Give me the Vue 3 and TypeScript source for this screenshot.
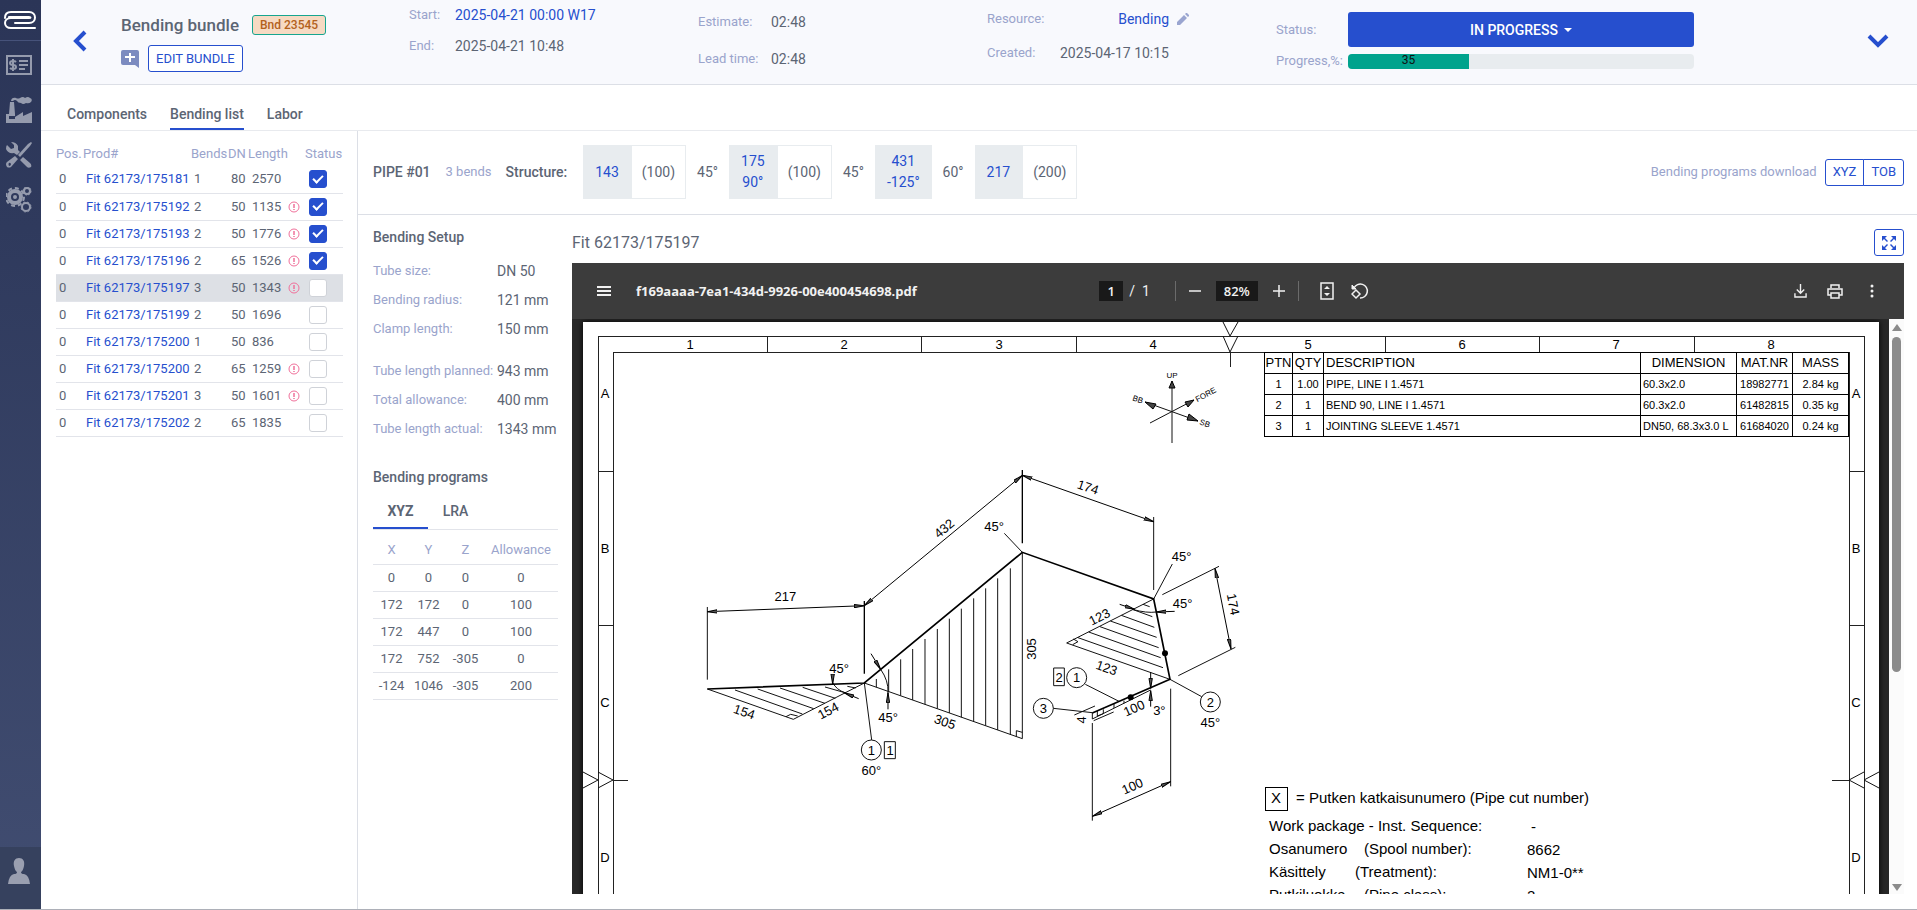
<script setup lang="ts">
import { ref } from 'vue'

interface Pipe { prod: string; bends: number; dn: number; length: number; alert: boolean; done: boolean }
interface Segment { main: string[]; extra?: string; angle?: string }
interface Mark { t: string; x: number; y: number; r?: number }

const pipes = ref<Pipe[]>([
  { prod: 'Fit 62173/175181', bends: 1, dn: 80, length: 2570, alert: false, done: true },
  { prod: 'Fit 62173/175192', bends: 2, dn: 50, length: 1135, alert: true, done: true },
  { prod: 'Fit 62173/175193', bends: 2, dn: 50, length: 1776, alert: true, done: true },
  { prod: 'Fit 62173/175196', bends: 2, dn: 65, length: 1526, alert: true, done: true },
  { prod: 'Fit 62173/175197', bends: 3, dn: 50, length: 1343, alert: true, done: false },
  { prod: 'Fit 62173/175199', bends: 2, dn: 50, length: 1696, alert: false, done: false },
  { prod: 'Fit 62173/175200', bends: 1, dn: 50, length: 836, alert: false, done: false },
  { prod: 'Fit 62173/175200', bends: 2, dn: 65, length: 1259, alert: true, done: false },
  { prod: 'Fit 62173/175201', bends: 3, dn: 50, length: 1601, alert: true, done: false },
  { prod: 'Fit 62173/175202', bends: 2, dn: 65, length: 1835, alert: false, done: false },
])
const selected = ref(4)
const progress = ref(35)
const page = ref('1')
const zoomLevel = ref('82%')

const segments: Segment[] = [
  { main: ['143'], extra: '(100)', angle: '45°' },
  { main: ['175', '90°'], extra: '(100)', angle: '45°' },
  { main: ['431', '-125°'], angle: '60°' },
  { main: ['217'], extra: '(200)' },
]

const setup = [
  [['Tube size:', 'DN 50'], ['Bending radius:', '121 mm'], ['Clamp length:', '150 mm']],
  [['Tube length planned:', '943 mm'], ['Total allowance:', '400 mm'], ['Tube length actual:', '1343 mm']],
]

const program = [
  [0, 0, 0, 0],
  [172, 172, 0, 100],
  [172, 447, 0, 100],
  [172, 752, -305, 0],
  [-124, 1046, -305, 200],
]

const parts = [
  ['1', '1.00', 'PIPE, LINE I 1.4571', '60.3x2.0', '18982771', '2.84 kg'],
  ['2', '1', 'BEND 90, LINE I 1.4571', '60.3x2.0', '61482815', '0.35 kg'],
  ['3', '1', 'JOINTING SLEEVE 1.4571', 'DN50, 68.3x3.0 L', '61684020', '0.24 kg'],
]

const columnTicks = [767, 921, 1076, 1385, 1539, 1694]
const columnMarks = [690, 844, 999, 1153, 1308, 1462, 1616, 1771]
const rowTicks = [471, 625]
const rowMarks: [string, number][] = [['A', 394], ['B', 549], ['C', 703], ['D', 858]]

/* Isometric drawing, three units per page pixel. */
const hatchTall: [number, number][] = [
  [559, 657], [596, 628], [632, 598], [668, 567], [705, 537], [742, 507],
  [778, 476], [814, 446], [851, 415], [887, 385], [923, 355], [961, 325],
]
const tallBase = (x: number) => Math.round(669 + 0.3523 * (x - 523))
const hatchLeft = 'M135 690L337 762M203 687L371 746M270 684L405 730M338 682L436 715M405 681L468 699M472 679L497 684'
const hatchRight = 'M1359 433L1379 440M1327 448L1387 470M1294 466L1393 502M1261 483L1400 532M1230 500L1406 563M1196 516L1412 593M1164 533L1419 623'
const dimensions = [
  'M52 455L523 437', 'M523 437L997 46', 'M997 46L1391 185', 'M1575 325L1623 567', 'M1207 1069L1442 965',
]
const pointers = [
  'M543 581L572 628', 'M594 748L594 698', 'M428 650L428 672', 'M506 716L462 698',
  'M1289 433L1334 448', 'M1454 454L1399 456', 'M1382 636L1382 685', 'M1382 740L1382 692',
]
const marks: Mark[] = [
  { t: '217', x: 286, y: 410 }, { t: '432', x: 762, y: 205, r: -40 }, { t: '45°', x: 912, y: 200 },
  { t: '154', x: 163, y: 755, r: 19 }, { t: '154', x: 414, y: 752, r: -28 }, { t: '45°', x: 447, y: 625 },
  { t: '45°', x: 594, y: 773 }, { t: '305', x: 765, y: 785, r: 19 }, { t: '305', x: 1025, y: 567, r: -90 },
  { t: '1', x: 544, y: 870 }, { t: '1', x: 600, y: 870 }, { t: '60°', x: 544, y: 932 },
  { t: '174', x: 1194, y: 81, r: 19 }, { t: '45°', x: 1475, y: 290 }, { t: '174', x: 1630, y: 433, r: 79 },
  { t: '45°', x: 1478, y: 431 }, { t: '123', x: 1228, y: 470, r: -27 }, { t: '123', x: 1250, y: 623, r: 19 },
  { t: '2', x: 1107, y: 651 }, { t: '1', x: 1160, y: 653 }, { t: '3', x: 1060, y: 745 },
  { t: '2', x: 1561, y: 726 }, { t: '45°', x: 1561, y: 788 }, { t: '100', x: 1332, y: 744, r: -24 },
  { t: '3°', x: 1408, y: 751 }, { t: '4', x: 1175, y: 780, r: -90 }, { t: '100', x: 1327, y: 978, r: -24 },
]
const balloons: [number, number][] = [[544, 870], [1160, 653], [1060, 745], [1561, 726]]

const legend: [string, string, number, string, number][] = [
  ['Work package - Inst. Sequence:', '', 0, '-', 831],
  ['Osanumero', '(Spool number):', 1364, '8662', 854],
  ['Käsittely', '(Treatment):', 1355, 'NM1-0**', 877],
  ['Putkiluokka', '(Pipe class):', 1364, '2', 900],
]
</script>

<template>
  <div class="app">
    <nav class="side" aria-label="Main">
      <a class="logo" href="#" aria-label="Home">
        <svg width="34" height="20" viewBox="0 0 34 20" fill="none" stroke="#fff" stroke-width="2" stroke-linecap="round">
          <path d="M2 8C2 4 4 2 8 2H26C34 2 34 13 26 13H12" />
          <path d="M6 7H26C28 7 28 8 26 8H8C0 8 0 18 8 18H32" />
        </svg>
      </a>
      <a class="nav" href="#" aria-label="Quotes">
        <svg width="26" height="20" viewBox="0 0 26 20">
          <path fill="none" stroke="#959bad" stroke-width="2" d="M1 1H25V19H1Z" />
          <path fill="none" stroke="#959bad" stroke-width="2" d="M13 6H22M13 10H22M13 14H19M10 7Q9 6 7 6Q4 6 4 8Q4 10 7 10Q10 10 10 12Q10 14 7 14Q5 14 4 13M7 4V16" />
        </svg>
      </a>
      <a class="nav" href="#" aria-label="Production">
        <svg width="26" height="26" viewBox="0 0 26 26" fill="#959bad">
          <path fill-rule="evenodd" d="M0 26V17H3L4 5H8L9 17V20L17 15V19L26 15V26ZM3 19V22H9V19Z" />
          <path d="M5 4C5 1 8 0 10 1Q12 2 14 1Q17-1 19 1Q22-1 24 1Q27 2 25 5Q23 7 20 6Q17 8 15 6Q12 6 11 4Q9 2 7 4Z" />
        </svg>
      </a>
      <a class="nav" href="#" aria-label="Tools">
        <svg width="26" height="26" viewBox="0 0 26 26" fill="#959bad">
          <path d="M1 3L5 7L8 6V3L5 0Q10 0 12 4Q12 6 12 8L14 10L11 13L8 11Q2 12 0 7Q0 4 1 3Z" />
          <path d="M17 15L24 21Q26 23 25 25Q22 27 20 24L14 18Z" />
          <path d="M26 1L25 0L22 2L12 13L14 15L24 4Z" />
          <path fill-rule="evenodd" d="M9 14L12 17L5 25Q3 26 1 25Q-1 22 1 20ZM3 21Q2 22 3 24Q5 24 5 22Q4 20 3 21Z" />
        </svg>
      </a>
      <a class="nav" href="#" aria-label="Settings">
        <svg width="26" height="26" viewBox="0 0 26 26" fill="none" stroke="#959bad">
          <circle cx="9" cy="10" r="6" stroke-width="4" />
          <circle cx="9" cy="10" r="9" stroke-width="2" stroke-dasharray="4 3" />
          <circle cx="9" cy="10" r="1" stroke-width="2" />
          <circle cx="21" cy="4" r="3" stroke-width="2" />
          <circle cx="21" cy="4" r="4" stroke-width="1" stroke-dasharray="2 1" />
          <circle cx="20" cy="20" r="4" stroke-width="2" />
          <circle cx="20" cy="20" r="5" stroke-width="1" stroke-dasharray="2 2" />
        </svg>
      </a>
      <a class="user" href="#" aria-label="Account">
        <svg width="22" height="26" viewBox="0 0 22 26" fill="#9a9fb0">
          <path d="M11 0C15 0 17 3 16 8Q15 13 13 14Q13 16 16 16Q21 17 22 26H0Q1 17 6 16Q9 16 9 14Q7 13 6 8C5 3 7 0 11 0Z" />
        </svg>
      </a>
    </nav>

    <main class="main">
      <header class="head">
        <button class="bare back" aria-label="Back">
          <svg width="14" height="22" viewBox="0 0 14 22" fill="none" stroke="#264fce" stroke-width="4"><path d="M12 2L3 11L12 20" /></svg>
        </button>
        <div class="bundle">
          <div class="line">
            <h1>Bending bundle</h1>
            <span class="badge">Bnd 23545</span>
          </div>
          <div class="line tools">
            <button class="bare" aria-label="Add comment">
              <svg width="18" height="18" viewBox="0 0 18 18"><path fill="#7c8bc0" d="M2 0H16Q18 0 18 2V18L14 15H2Q0 15 0 13V2Q0 0 2 0Z" /><path stroke="#fff" stroke-width="2" d="M9 3V12M4 7H14" /></svg>
            </button>
            <button class="outline">EDIT BUNDLE</button>
          </div>
        </div>
        <dl class="meta dates">
          <dt>Start:</dt><dd class="blue">2025-04-21 00:00 W17</dd>
          <dt>End:</dt><dd>2025-04-21 10:48</dd>
        </dl>
        <dl class="meta times">
          <dt>Estimate:</dt><dd>02:48</dd>
          <dt>Lead time:</dt><dd>02:48</dd>
        </dl>
        <dl class="meta origin">
          <dt>Resource:</dt>
          <dd class="blue">Bending</dd>
          <dd class="pen"><button class="bare" aria-label="Edit resource">
            <svg width="12" height="12" viewBox="0 0 12 12" fill="#9aa5d0"><path d="M0 12V9L7 2L10 5L3 12ZM8 1L9 0H10L12 2V3L11 4Z" /></svg>
          </button></dd>
          <dt>Created:</dt><dd>2025-04-17 10:15</dd>
        </dl>
        <div class="state">
          <span class="label">Status:</span>
          <button class="status" aria-haspopup="listbox">IN PROGRESS<i class="caret"></i></button>
          <span class="label">Progress,%:</span>
          <div class="bar" role="progressbar" :aria-valuenow="progress" aria-label="Progress">
            <div class="fill" :style="{ width: progress + '%' }">{{ progress }}</div>
          </div>
        </div>
        <button class="bare expand" aria-label="Show details">
          <svg width="22" height="14" viewBox="0 0 22 14" fill="none" stroke="#264fce" stroke-width="4"><path d="M2 2L11 11L20 2" /></svg>
        </button>
      </header>

      <div class="tabs" role="tablist">
        <button class="tab" role="tab">Components</button>
        <button class="tab on" role="tab" aria-selected="true">Bending list</button>
        <button class="tab" role="tab">Labor</button>
      </div>

      <div class="work">
        <aside class="list">
          <table class="pipes">
            <colgroup><col class="c1"><col class="c2"><col class="c3"><col class="c4"><col class="c5"><col class="c6"><col class="c7"></colgroup>
            <thead>
              <tr><th>Pos.</th><th>Prod#</th><th>Bends</th><th>DN</th><th colspan="2">Length</th><th>Status</th></tr>
            </thead>
            <tbody>
              <tr v-for="(p, i) in pipes" :key="i" :class="{ sel: i === selected }" @click="selected = i">
                <td class="nar">0</td>
                <td class="nar"><a href="#" @click.prevent>{{ p.prod }}</a></td>
                <td class="nar">{{ p.bends }}</td>
                <td class="nar">{{ p.dn }}</td>
                <td class="in">{{ p.length }}</td>
                <td>
                  <svg v-if="p.alert" class="alert" width="12" height="12" viewBox="0 0 12 12" fill="none" stroke="#f0719b"><circle cx="6" cy="6" r="5" /><path stroke-width="1.5" d="M6 3V7M6 8V9" /></svg>
                </td>
                <td class="in"><input v-model="p.done" type="checkbox" class="check" :aria-label="'Status of ' + p.prod"></td>
              </tr>
            </tbody>
          </table>
        </aside>

        <section class="detail">
          <div class="structure">
            <h2>PIPE #01</h2>
            <span class="label bends">3 bends</span>
            <h2>Structure:</h2>
            <div class="chain">
              <template v-for="(s, i) in segments" :key="i">
                <div class="seg">
                  <div class="solid"><span v-for="m in s.main" :key="m">{{ m }}</span></div>
                  <div v-if="s.extra" class="hollow">{{ s.extra }}</div>
                </div>
                <span v-if="s.angle">{{ s.angle }}</span>
              </template>
            </div>
            <span class="label download">Bending programs download</span>
            <div class="pair">
              <button class="outline">XYZ</button><button class="outline">TOB</button>
            </div>
          </div>

          <div class="body">
            <div class="info">
              <h2>Bending Setup</h2>
              <dl v-for="(g, i) in setup" :key="i" class="facts">
                <template v-for="f in g" :key="f[0]"><dt>{{ f[0] }}</dt><dd>{{ f[1] }}</dd></template>
              </dl>
              <h2 class="second">Bending programs</h2>
              <div class="subtabs" role="tablist">
                <button class="subtab on" role="tab" aria-selected="true">XYZ</button>
                <button class="subtab" role="tab">LRA</button>
              </div>
              <table class="coords">
                <colgroup><col class="n"><col class="n"><col class="n"><col></colgroup>
                <thead><tr><th>X</th><th>Y</th><th>Z</th><th>Allowance</th></tr></thead>
                <tbody>
                  <tr v-for="(r, i) in program" :key="i"><td v-for="(v, j) in r" :key="j">{{ v }}</td></tr>
                </tbody>
              </table>
            </div>

            <div class="doc">
              <div class="title">
                <h3>Fit 62173/175197</h3>
                <button class="outline full" aria-label="Full screen">
                  <svg width="14" height="14" viewBox="0 0 14 14" fill="#264fce"><path d="M0 0H5L3 2L6 5L5 6L2 3L0 5ZM14 0V5L12 3L9 6L8 5L11 2L9 0ZM0 14V9L2 11L5 8L6 9L3 12L5 14ZM14 14H9L11 12L8 9L9 8L12 11L14 9Z" /></svg>
                </button>
              </div>
              <div class="viewer">
                <div class="toolbar">
                  <div class="group">
                    <button class="bare" aria-label="Menu"><svg width="14" height="10" viewBox="0 0 14 10" stroke="#f1f1f1" stroke-width="2"><path d="M0 1H14M0 5H14M0 9H14" /></svg></button>
                    <span class="file">f169aaaa-7ea1-434d-9926-00e400454698.pdf</span>
                  </div>
                  <div class="group mid">
                    <input v-model="page" class="box" aria-label="Page"><span class="of">/&nbsp; 1</span>
                    <i class="rule"></i>
                    <button class="bare" aria-label="Zoom out"><svg width="12" height="12" viewBox="0 0 12 12" stroke="#f1f1f1" stroke-width="1.5"><path d="M0 6H12" /></svg></button>
                    <input v-model="zoomLevel" class="box wide" aria-label="Zoom">
                    <button class="bare" aria-label="Zoom in"><svg width="12" height="12" viewBox="0 0 12 12" stroke="#f1f1f1" stroke-width="1.5"><path d="M0 6H12M6 0V12" /></svg></button>
                    <i class="rule"></i>
                    <button class="bare fit" aria-label="Fit to page"><svg width="14" height="18" viewBox="0 0 14 18"><path fill="none" stroke="#f1f1f1" stroke-width="1.5" d="M1 1H13V17H1Z" /><path fill="#f1f1f1" d="M7 4L10 7H4ZM7 14L10 11H4Z" /></svg></button>
                    <button class="bare" aria-label="Rotate"><svg width="18" height="18" viewBox="0 0 18 18" fill="none" stroke="#f1f1f1" stroke-width="1.5"><path d="M3 6A7 7 0 1 1 9 16" /><path stroke-width="1" fill="#f1f1f1" d="M1 3V7H5Z" /><path d="M5 8L9 12L5 16L1 12Z" /></svg></button>
                  </div>
                  <div class="group end">
                    <button class="bare" aria-label="Download"><svg width="13" height="14" viewBox="0 0 14 15" fill="none" stroke="#f1f1f1" stroke-width="1.5"><path d="M1 10V14H13V10M7 0V9M3 6L7 10L11 6" /></svg></button>
                    <button class="bare" aria-label="Print"><svg width="16" height="15" viewBox="0 0 16 15" fill="none" stroke="#f1f1f1" stroke-width="1.5"><path d="M4 4V1H12V4M4 11H1V5H15V11H12M4 9H12V14H4Z" /></svg></button>
                    <button class="bare more" aria-label="More"><svg width="4" height="14" viewBox="0 0 4 14" fill="#f1f1f1"><circle cx="2" cy="2" r="1.5" /><circle cx="2" cy="7" r="1.5" /><circle cx="2" cy="12" r="1.5" /></svg></button>
                  </div>
                </div>
                <div class="stage">
                  <div class="paper">
                    <svg class="sheet" viewBox="583 322 1296 640" role="img" aria-label="Isometric pipe drawing">
                      <defs>
                        <marker id="tip" markerUnits="userSpaceOnUse" markerWidth="32" markerHeight="14" refX="30" refY="6" orient="auto-start-reverse" viewBox="0 0 32 12">
                          <path d="M0 1L30 6L0 11Z" fill="#555" stroke="#000" stroke-width="3" />
                        </marker>
                      </defs>
                      <g fill="none" stroke="#222" stroke-width="1" shape-rendering="crispEdges">
                        <path d="M598 336H1864V970H598ZM613 970V352H1849V970" />
                        <path v-for="x in columnTicks" :key="x" :d="`M${x} 336V352`" />
                        <path v-for="y in rowTicks" :key="y" :d="`M598 ${y}H613M1849 ${y}H1864`" />
                        <path d="M1230 352V367M613 780H628M1832 780H1849" />
                      </g>
                      <g fill="none" stroke="#111" stroke-width="1">
                        <path d="M1223 322L1230 336L1238 322M1223 336L1230 352L1238 336" />
                        <path d="M583 772L598 780L583 788M598 772L613 780L598 788M1864 772L1849 780L1864 788M1879 772L1864 780L1879 788" />
                        <path d="M1172 381V443M1150 423L1194 400M1145 402L1198 421" />
                      </g>
                      <path fill="#444" stroke="#000" d="M1172 381L1175 388H1169ZM1194 400L1188 407L1185 402ZM1145 402L1156 404L1153 409ZM1198 421L1187 420L1189 414Z" />
                      <g class="grid-text">
                        <text v-for="(x, i) in columnMarks" :key="x" :x="x" y="349">{{ i + 1 }}</text>
                        <template v-for="r in rowMarks" :key="r[0]">
                          <text x="605" :y="r[1] + 4">{{ r[0] }}</text>
                          <text x="1856" :y="r[1] + 4">{{ r[0] }}</text>
                        </template>
                      </g>
                      <g class="tiny">
                        <text x="1172" y="378">UP</text>
                        <text transform="translate(1207 397) rotate(-28)">FORE</text>
                        <text transform="translate(1137 402) rotate(18)">BB</text>
                        <text transform="translate(1204 426) rotate(18)">SB</text>
                      </g>
                      <foreignObject x="1264" y="352" width="590" height="90">
                        <table class="bom">
                          <colgroup><col class="b1"><col class="b2"><col class="b3"><col class="b4"><col class="b5"><col class="b5"></colgroup>
                          <thead><tr><th>PTN</th><th>QTY</th><th class="left">DESCRIPTION</th><th>DIMENSION</th><th>MAT.NR</th><th>MASS</th></tr></thead>
                          <tbody>
                            <tr v-for="p in parts" :key="p[0]"><td v-for="(v, j) in p" :key="j" :class="{ left: j === 2 || j === 3 }">{{ v }}</td></tr>
                          </tbody>
                        </table>
                      </foreignObject>

                      <g transform="translate(690 460) scale(0.333333)">
                        <g fill="none" stroke="#111" stroke-width="3">
                          <path d="M52 441V659M1207 789V1082M1442 686V979M1391 171V390M943 220L997 277" />
                          <path d="M52 687L310 778L523 669L997 836V277M1391 417L1130 549L1440 658" />
                          <path d="M288 770L302 763L323 768M979 830V812L997 817M1150 537L1164 545L1148 554" />
                          <path d="M1447 312L1391 417M1417 404L1587 319M1465 647L1636 562" />
                          <path d="M523 669L545 840M1186 673L1287 724M1090 745L1207 758M1440 658L1535 710" />
                          <path d="M1207 759V777L1382 690M1222 753V768L1240 761V748M1272 732V744M1302 722V730M1153 765L1215 738M1211 782L1271 756" />
                          <path :d="hatchLeft" />
                          <path :d="hatchRight" />
                          <path v-for="h in hatchTall" :key="h[0]" :d="`M${h[0]} ${h[1]}V${tallBase(h[0])}`" />
                          <path d="M572 628Q596 662 594 698M428 668Q440 690 465 698M1327 448Q1370 460 1399 456" />
                          <circle v-for="b in balloons" :key="b[0]" :cx="b[0]" :cy="b[1]" r="30" />
                          <path d="M583 845H616V896H583ZM1091 624H1123V677H1091Z" />
                        </g>
                        <g fill="none" stroke="#000" stroke-width="3">
                          <path v-for="d in dimensions" :key="d" :d="d" marker-start="url(#tip)" marker-end="url(#tip)" />
                          <path v-for="d in pointers" :key="d" :d="d" marker-end="url(#tip)" />
                        </g>
                        <path fill="none" stroke="#000" stroke-width="4" d="M523 423V641M997 30V250" />
                        <path fill="none" stroke="#000" stroke-width="5" d="M52 687L523 669L997 277L1391 417L1440 658L1207 759" />
                        <circle cx="1425" cy="580" r="9" /><circle cx="1322" cy="712" r="9" />
                        <g class="dims">
                          <text v-for="(m, i) in marks" :key="i" :transform="`translate(${m.x} ${m.y}) rotate(${m.r ?? 0})`" y="14">{{ m.t }}</text>
                        </g>
                      </g>

                      <path fill="none" stroke="#000" d="M1265 787H1287V810H1265Z" shape-rendering="crispEdges" />
                      <g class="legend">
                        <text x="1271" y="803">X</text>
                        <text x="1296" y="803">= Putken katkaisunumero (Pipe cut number)</text>
                        <template v-for="l in legend" :key="l[4]">
                          <text x="1269" :y="l[4]">{{ l[0] }}</text>
                          <text v-if="l[1]" :x="l[2]" :y="l[4]">{{ l[1] }}</text>
                          <text :x="l[3] === '-' ? 1531 : 1527" :y="l[4] + 1">{{ l[3] }}</text>
                        </template>
                      </g>
                    </svg>
                  </div>
                  <div class="scroll"><i class="up"></i><i class="thumb"></i><i class="down"></i></div>
                </div>
              </div>
            </div>
          </div>
        </section>
      </div>
    </main>
  </div>
</template>

<style>
body { margin: 0; background: #fff; }
</style>

<style scoped>
* { box-sizing: border-box; }
.app { display: flex; height: 100vh; overflow: hidden; border-bottom: 1px solid #adb0b8; font: 14px/20px Roboto, "Liberation Sans", sans-serif; color: #5c6574; background: #fff; }
button, input { font: inherit; color: inherit; margin: 0; }
h1, h2, h3, dl, dd { margin: 0; }
h1 { font-size: 17px; font-weight: 500; }
h2 { font-size: 14px; font-weight: 500; }
h3 { font-size: 16px; font-weight: 400; }
.bare { display: inline-flex; padding: 0; border: 0; background: none; cursor: pointer; }
.outline { height: 27px; padding: 0 7px; border: 1px solid #264fce; border-radius: 3px; background: #fff; color: #264fce; font-size: 13px; line-height: 18px; cursor: pointer; }
.label, dt { color: #9aa4cc; font-size: 13px; }
.blue { color: #264fce; }

.side { flex: 0 0 41px; display: flex; flex-direction: column; align-items: center; gap: 19px; background: linear-gradient(#2b3557, #2f3a5d 25%, #414d71); }
.logo { display: flex; align-items: center; justify-content: center; width: 100%; height: 41px; margin-bottom: -5px; padding-right: 2px; border-bottom: 1px solid #46527a; }
.nav { display: flex; width: 29px; }
.nav + .nav { margin-top: 3px; }
.nav + .nav + .nav { margin-top: 0; }
.user { display: flex; justify-content: center; width: 100%; height: 62px; margin-top: auto; padding: 11px 3px 0 0; background: #36415e; }

.main { flex: 1; min-width: 0; display: flex; flex-direction: column; }
.head { flex: none; display: grid; grid-template-columns: 80px 288fr 289fr 289fr 289fr 418fr 223fr; height: 85px; background: #f8f9fd; border-bottom: 1px solid #dcdfe6; }
.back { align-self: start; margin: 30px 0 0 32px; }
.line { display: flex; align-items: center; }
.bundle { padding-top: 15px; white-space: nowrap; }
.bundle .line { gap: 13px; height: 20px; }
.bundle .tools { gap: 9px; height: 27px; margin-top: 10px; }
.badge { height: 20px; padding: 0 7px; border: 1px solid #16a58f; border-radius: 3px; background: #f6dac3; color: #b3611c; font-size: 12px; line-height: 18px; font-weight: 500; }
.meta { display: grid; align-content: start; justify-content: start; white-space: nowrap; }
.dates { grid-template-columns: 46px auto; padding-top: 5px; row-gap: 11px; }
.times { grid-template-columns: 73px auto; padding-top: 12px; row-gap: 17px; }
.origin { grid-template-columns: 70px 112px 20px; padding-top: 9px; row-gap: 14px; }
.origin dd { text-align: right; }
.pen { display: flex; align-items: center; justify-content: flex-end; }
.state { display: grid; grid-template-columns: 72px 1fr; align-content: start; align-items: center; padding-top: 12px; row-gap: 4px; }
.status { display: flex; align-items: center; justify-content: center; gap: 6px; height: 35px; border: 0; border-radius: 3px; background: #264fce; color: #fff; font-weight: 500; cursor: pointer; }
.caret { border: 4px solid transparent; border-top-color: #fff; border-bottom: 0; }
.bar { height: 15px; border-radius: 4px; background: #e8ecef; overflow: hidden; }
.fill { height: 100%; background: #00a38d; color: #111; font-size: 12px; line-height: 13px; text-align: center; }
.expand { align-self: start; justify-self: end; margin: 34px 28px 0 0; }

.tabs { flex: none; display: flex; align-items: flex-end; gap: 23px; height: 46px; padding-left: 26px; border-bottom: 1px solid #e8eaee; }
.tab { height: 30px; padding: 0; border: 0; border-bottom: 2px solid transparent; background: none; font-weight: 500; cursor: pointer; }
.tab.on, .subtab.on { border-bottom-color: #264fce; }

.work { flex: 1; min-height: 0; display: flex; }
.list { flex: 0 0 317px; padding: 11px 14px 0 15px; border-right: 1px solid #dcdfe6; }
table { border-collapse: collapse; table-layout: fixed; width: 100%; }
.pipes { font-size: 13px; }
.c1 { width: 27px; } .c2 { width: 108px; } .c3 { width: 37px; } .c4 { width: 20px; } .c5 { width: 40px; } .c6 { width: 17px; }
th { padding: 0; font-weight: 400; color: #9aa4cc; text-align: left; white-space: nowrap; }
.pipes th { height: 24px; }
.pipes td { height: 27px; padding: 0; border-bottom: 1px solid #e2e4ea; white-space: nowrap; }
.pipes .in { padding-left: 4px; }
.pipes .nar { padding-left: 3px; }
.pipes a { color: #264fce; text-decoration: none; }
.sel { background: #dde0e5; }
.alert { display: block; }
.check { appearance: none; display: grid; place-items: center; width: 18px; height: 18px; border: 1px solid #cfd2d8; border-radius: 3px; background: #fff; }
.check:checked { background: #264fce; border-color: #264fce; }
.check:checked::before { content: ""; width: 8px; height: 4px; margin-top: -3px; border-left: 2px solid #fff; border-bottom: 2px solid #fff; transform: rotate(-45deg); }

.detail { flex: 1; min-width: 0; display: flex; flex-direction: column; }
.structure { flex: none; display: flex; align-items: center; height: 84px; padding: 0 13px 1px 15px; border-bottom: 1px solid #dcdfe6; }
.bends { margin: 0 14px 0 15px; }
.chain { display: flex; align-items: center; gap: 11px; margin-left: 16px; }
.seg { display: flex; height: 54px; background: #e8ecef; }
.solid { display: flex; flex-direction: column; justify-content: center; padding: 0 12px; color: #264fce; text-align: center; line-height: 21px; }
.hollow { display: flex; align-items: center; padding: 0 10px; border: 1px solid #e8ecef; background: #fff; }
.download { margin: 0 8px 0 auto; }
.pair { display: flex; }
.pair .outline:first-child { border-radius: 3px 0 0 3px; }
.pair .outline:last-child { margin-left: -1px; border-radius: 0 3px 3px 0; }

.body { flex: 1; min-height: 0; display: flex; }
.info { flex: 0 0 214px; padding: 12px 14px 0 15px; }
.facts { display: grid; grid-template-columns: 124px auto; row-gap: 9px; margin: 14px 0 22px; white-space: nowrap; }
.facts + .facts { margin-top: 0; }
.second { margin-top: 28px; }
.subtabs { display: flex; height: 34px; margin-top: 9px; border-bottom: 1px solid #e2e4ea; }
.subtab { width: 55px; height: 33px; padding: 0 0 2px; border: 0; border-bottom: 2px solid transparent; background: none; font-weight: 500; cursor: pointer; }
.subtab.on { font-weight: 700; }
.coords { font-size: 13px; margin-top: 7px; }
.coords th, .coords td { height: 27px; padding: 0; border-bottom: 1px solid #e2e4ea; text-align: center; }
.n { width: 37px; }

.doc { flex: 1; min-width: 0; display: flex; flex-direction: column; padding: 14px 13px 15px 0; }
.title { display: flex; align-items: center; justify-content: space-between; height: 27px; margin-bottom: 7px; }
.full { display: flex; align-items: center; justify-content: center; width: 30px; padding: 0; }
.viewer { flex: 1; min-height: 0; display: flex; flex-direction: column; background: #282828; }
.toolbar { flex: none; display: grid; grid-template-columns: 1fr auto 1fr; align-items: center; height: 56px; background: #3c3c3c; color: #f1f1f1; }
.group { display: flex; align-items: center; }
.group:first-child { gap: 25px; padding-left: 25px; }
.file { font: 700 13px/20px "Open Sans", sans-serif; }
.mid { gap: 15px; margin-right: 8px; }
.mid .box { width: 24px; height: 20px; padding: 0; border: 0; background: #191919; font: 600 13px/20px "Open Sans", sans-serif; text-align: center; }
.mid .wide { width: 42px; }
.of { margin: 0 12px 0 -9px; }
.rule { width: 1px; height: 20px; margin: 0 -2px; background: #6b6b6b; }
.fit { margin: 0 2px 0 8px; }
.end { justify-content: flex-end; gap: 20px; padding-right: 30px; }
.more { margin-left: 7px; }
.stage { flex: 1; min-height: 0; display: flex; }
.paper { flex: 1; min-width: 0; padding: 3px 10px 0 11px; overflow: hidden; }
.sheet { display: block; width: 100%; background: #fff; box-shadow: 0 0 6px #000; }
.sheet text { font-family: "Liberation Sans", Arial, sans-serif; fill: #000; }
.grid-text text { font-size: 13px; text-anchor: middle; }
.tiny text { font-size: 8px; text-anchor: middle; }
.dims text { font-size: 39px; text-anchor: middle; }
.legend text { font-size: 15px; }
.bom { width: 585px; font: 11px/20px "Liberation Sans", Arial, sans-serif; color: #000; }
.bom th, .bom td { height: 21px; padding: 0; border: 1px solid #000; text-align: center; white-space: nowrap; color: #000; }
.bom th { font-size: 13px; }
.bom .left { padding-left: 2px; text-align: left; }
.b1 { width: 28px; } .b2 { width: 31px; } .b4 { width: 96px; } .b5 { width: 56px; }
.scroll { flex: 0 0 15px; display: flex; flex-direction: column; align-items: center; padding: 5px 0 3px; background: #fbfbfb; }
.up { border: 5px solid transparent; border-top: 0; border-bottom: 7px solid #8b8b8b; }
.down { margin-top: auto; border: 5px solid transparent; border-bottom: 0; border-top: 7px solid #8b8b8b; }
.thumb { width: 9px; height: 59%; margin-top: 6px; border-radius: 5px; background: #8b8b8b; }
</style>
